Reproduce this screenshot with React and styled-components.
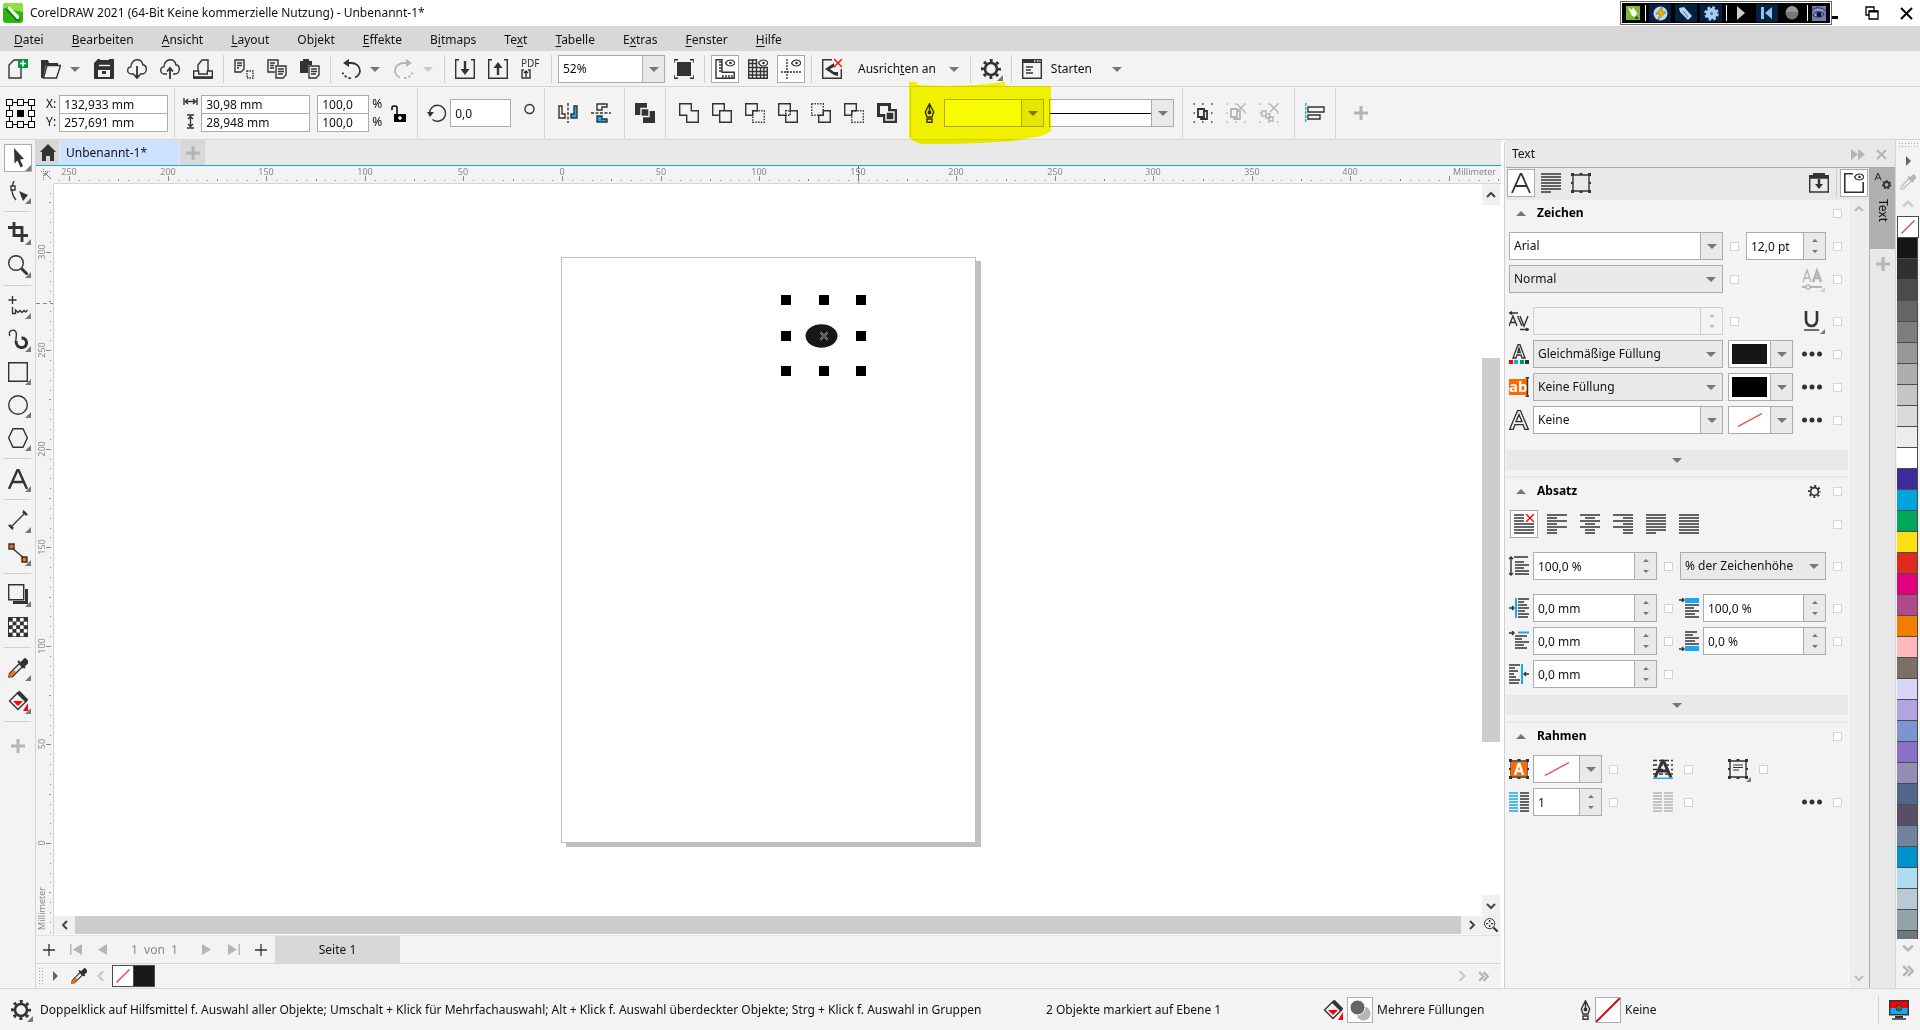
import styled, { createGlobalStyle, css } from "styled-components";

const INK = "#333333";
const MUTED = "#b5b5b5";
const BLUE = "#16a9f0";
const ORANGE = "#ff6a00";
const PX_PER_MM = 1.9712;

/* ---------- icons ---------- */

const Icon = ({ size = 20, children, ...rest }) => (
  <svg
    width={size}
    height={size}
    viewBox="0 0 20 20"
    fill="none"
    stroke={INK}
    strokeWidth="1.4"
    aria-hidden="true"
    {...rest}
  >
    {children}
  </svg>
);

const Flyout = () => <path d="M23 18v5h-5z" fill="#777" stroke="none" />;

const Caret = ({ dir = "down", color = "#777", w = 10, h = 5 }) => (
  <svg width={w} height={h} viewBox="0 0 10 5" preserveAspectRatio="none" aria-hidden="true">
    <path d={dir === "down" ? "M0 0h10L5 5z" : "M0 5h10L5 0z"} fill={color} />
  </svg>
);

const Chevron = ({ d, color = "#444", size = 10 }) => (
  <svg width={size} height={size} viewBox="0 0 10 10" fill="none" stroke={color} strokeWidth="2" aria-hidden="true">
    <path d={d} />
  </svg>
);

const UP = "M1 7l4-4 4 4";
const DOWN = "M1 3l4 4 4-4";
const LEFT = "M7 1L3 5l4 4";
const RIGHT = "M3 1l4 4-4 4";
const DOUBLE = "M1 1l4 4-4 4M5 1l4 4-4 4";

const Plus = ({ color = MUTED, size = 14, weight = 3 }) => (
  <svg width={size} height={size} viewBox="0 0 14 14" stroke={color} strokeWidth={weight} aria-hidden="true">
    <path d="M7 0v14M0 7h14" />
  </svg>
);

const Lines = ({ rows, x = 0, y = 1, step = 3, color = INK }) => (
  <g stroke={color} strokeWidth="1.5">
    {rows.map(([from, to], i) => (
      <path key={i} d={`M${x + from} ${y + i * step}H${x + to}`} />
    ))}
  </g>
);

const NewIcon = () => (
  <Icon>
    <path d="M11 1H6L1 6v13h12V9" />
    <rect x="10" y="0" width="10" height="9" fill="#009a3a" stroke="none" />
    <path d="M15 1.500v6M12 4.500h6" stroke="#fff" strokeWidth="1.600" />
  </Icon>
);
const OpenIcon = () => (
  <Icon>
    <path d="M0 1h7l1 3h9v2H5L2 19H0z" fill={INK} stroke="none" />
    <path d="M6 6.500h13.500l-4 12.500H2.500z" />
  </Icon>
);
const SaveIcon = () => (
  <Icon>
    <path d="M0 4l4-4h16v20H0z" fill={INK} stroke="none" />
    <path d="M6 0h9v6H6zM4 11h12v7H4z" fill="#f3f3f3" stroke="none" />
    <path d="M7 0h8v6H7z" fill="#f3f3f3" stroke="none" />
    <path d="M5 1h11v5H5zM8 12h4v3H8z" fill={INK} stroke="none" />
    <path d="M5 6.500h11" stroke="#f3f3f3" />
  </Icon>
);
const CLOUD = "M7 15H4.500C2 15 .7 13.200 .7 11.400c0-1.900 1.400-3.400 3.300-3.500C3.800 4.200 6.500.8 10.200.8c3 0 5.200 2 5.700 5 2 .3 3.400 2.100 3.400 4.400 0 2.600-1.800 4.800-4.300 4.800h-2";
const CloudDownIcon = () => (
  <Icon>
    <path d={CLOUD} />
    <path d="M10 7v12M7 15.500l3 3.500 3-3.500" strokeWidth="1.800" />
  </Icon>
);
const CloudUpIcon = () => (
  <Icon>
    <path d={CLOUD} />
    <path d="M10 20V9M7 12.500L10 9l3 3.500" strokeWidth="1.800" />
  </Icon>
);
const PrintIcon = () => (
  <Icon>
    <path d="M5 12V6l4-5h6v11M0.700 12h5v3h8.600v-3h5v7H.7z" />
    <path d="M1 18.500h18" strokeWidth="2.500" />
  </Icon>
);
const CutIcon = () => (
  <Icon>
    <path d="M1 1h9v9L7 13H1zM3 4h5M3 6.500h5M3 9h2" />
    <path d="M13 12h6v7h-6z" strokeDasharray="1.500 1" />
  </Icon>
);
const CopyIcon = () => (
  <Icon>
    <path d="M8 13H1V1h10v5M3 4h5M3 6.500h4M3 9h4" />
    <path d="M9 7h10v9l-3 3H9zM11 10h6M11 12.500h6M11 15h5" />
  </Icon>
);
const PasteIcon = () => (
  <Icon>
    <path d="M0 2h3V0h6v2h3v4H8v8H0z" fill={INK} stroke="none" />
    <path d="M9 7h10v9l-3 3H9zM11 10h6M11 12.500h6M11 15h5" />
  </Icon>
);
const UndoIcon = () => (
  <Icon>
    <path d="M6 4h4c5 0 9 3 9 8-.3 3-2.500 5.500-5 6.500" strokeWidth="1.800" />
    <path d="M10 19.500C6 19 3 17 1.500 13.500" strokeDasharray="2.500 2" strokeWidth="1.800" />
    <path d="M8 0v8L2 4z" fill={INK} stroke="none" />
  </Icon>
);
const RedoIcon = () => (
  <Icon stroke={MUTED}>
    <path d="M14 4h-4c-5 0-9 3-9 8 .3 3 2.500 5.500 5 6.500" strokeWidth="1.800" />
    <path d="M10 19.500c4-.5 7-2.500 8.500-6" strokeDasharray="2.500 2" strokeWidth="1.800" />
    <path d="M12 0v8l6-4z" fill={MUTED} stroke="none" />
  </Icon>
);
const ImportIcon = () => (
  <Icon>
    <path d="M4 .7H.7v18.600h18.600V.7H16" />
    <path d="M10 2v10" strokeWidth="2.400" />
    <path d="M5.500 10h9L10 16z" fill={INK} stroke="none" />
  </Icon>
);
const ExportIcon = () => (
  <Icon>
    <path d="M4 .7H.7v18.600h18.600V.7H16" />
    <path d="M10 16V6" strokeWidth="2.400" />
    <path d="M5.500 9h9L10 3z" fill={INK} stroke="none" />
  </Icon>
);
const PdfIcon = () => (
  <Icon overflow="visible">
    <text x="0" y="8" fontSize="10" fill={INK} stroke="none">PDF</text>
    <path d="M3 11H1v8h8v-8H7M5 18v-6M3 14l2-2 2 2" />
  </Icon>
);
const FullScreenIcon = () => (
  <Icon>
    <path d="M0 4V.7h4M16 .7h4V4M20 16v3.300h-4M4 19.300H0V16" />
    <rect x="3" y="3" width="14" height="14" fill={INK} stroke="none" />
  </Icon>
);
const Eye = () => (
  <>
    <path d="M10.500 4C12 1.500 13.500 1 15.500 1S19 1.500 20 4c-1 2-2.500 3-4.500 3s-4-1-5-3z" fill="#fff" strokeWidth="1.200" />
    <circle cx="15.500" cy="4" r="1.300" fill={INK} stroke="none" />
  </>
);
const RulersIcon = () => (
  <Icon>
    <path d="M1 .7h6v12.500h12.300v6H1zM4 3h3M4 6h3M4 9h3M4 12h3M8 16v3M11 16v3M14 16v3M17 16v3" />
    <Eye />
  </Icon>
);
const GridIcon = () => (
  <Icon>
    <path d="M.7 .7v18.600h18.600M4.500 0v20M8.500 0v20M12.500 8v12M16 9v11M19.300 9v11M0 1h9M0 4.500h9M0 8.500h20M0 12.500h20M0 16h20" />
    <Eye />
  </Icon>
);
const GuidesIcon = () => (
  <Icon>
    <path d="M6 0v20M0 13h20" strokeDasharray="2 1" />
    <Eye />
  </Icon>
);
const SnapOffIcon = () => (
  <Icon>
    <path d="M10 .7H.7v18.600h18.600V10" />
    <path d="M3 10l9-6v4l-4 2 4 3h4v4l-4-1z" fill={INK} stroke="none" />
    <path d="M12 0l8 8M20 0l-8 8" stroke="red" />
  </Icon>
);
const GearIcon = ({ size = 20, flyout }) => (
  <Icon size={size} overflow="visible">
    <circle cx="10" cy="10" r="6" strokeWidth="2.600" />
    <circle cx="10" cy="10" r="8.500" strokeWidth="3" strokeDasharray="3 3.675" strokeDashoffset="1.500" />
    {flyout && <path d="M22 16v6h-6z" fill="#777" stroke="none" />}
  </Icon>
);
const LaunchIcon = () => (
  <Icon>
    <path d="M.7 1h18.600v18.300H.7zM4 8h7M4 11h5M4 14h7" />
    <path d="M0 2h20" strokeWidth="4" />
    <path d="M12 2h1.500M15 2h1.500M17.500 2h1" stroke="#fff" />
  </Icon>
);

const OriginIcon = () => (
  <svg width="29" height="29" viewBox="0 0 29 29" fill="#fff" stroke="#000" aria-hidden="true">
    <path d="M3.500 3.500h22v22h-22z" fill="none" />
    {[0, 11, 22].map((y) =>
      [0, 11, 22].map((x) => (
        <rect key={`${x}-${y}`} x={x + 0.5} y={y + 0.5} width="6" height="6" fill={x === 11 && y === 11 ? "#000" : "#fff"} />
      ))
    )}
  </svg>
);
const WidthIcon = () => (
  <svg width="15" height="9" viewBox="0 0 15 9" stroke={INK} strokeWidth="1.400" aria-hidden="true">
    <path d="M1 1v7M14 1v7M2 4.500h11M5 2L2.500 4.500 5 7M10 2l2.500 2.500L10 7" fill="none" />
  </svg>
);
const HeightIcon = () => (
  <svg width="9" height="15" viewBox="0 0 9 15" stroke={INK} strokeWidth="1.400" aria-hidden="true">
    <path d="M1 1h7M1 14h7M4.500 2v11M2 5l2.500-2.500L7 5M2 10l2.500 2.500L7 10" fill="none" />
  </svg>
);
const LockIcon = () => (
  <svg width="15" height="17" viewBox="0 0 15 17" fill="none" stroke="#000" strokeWidth="1.500" aria-hidden="true">
    <path d="M1 5V2.500c0-2 5-2 5 0V9" />
    <path d="M3 9h12v8H3z" fill="#000" stroke="none" />
    <path d="M9 11v4M7 13h4" stroke="#fff" />
  </svg>
);
const RotateIcon = () => (
  <Icon>
    <path d="M2.500 11a8 8 0 1 1 3 5.500" />
    <path d="M0 9h7l-4 5z" fill={INK} stroke="none" />
  </Icon>
);
const MirrorHIcon = () => (
  <Icon>
    <path d="M10 0v20" strokeDasharray="3 1.500" />
    <path d="M1 3h3v8h3v4H1z" />
    <path d="M19 3h-3v8h-3v4h6z" fill={BLUE} />
  </Icon>
);
const MirrorVIcon = () => (
  <Icon>
    <path d="M0 10h20" strokeDasharray="3 1.500" />
    <path d="M6 7V1h10v3h-5v3z" />
    <path d="M6 13v6h10v-3h-5v-3z" fill={BLUE} />
  </Icon>
);
const CombineIcon = () => (
  <Icon>
    <path d="M0 0h12v12H0zM8 8h12v12H8z" fill={INK} stroke="none" />
    <path d="M6 5.500h8v8H6z" fill={INK} stroke="#f3f3f3" />
  </Icon>
);
const A = "M.7.7h11.600v11.600H.7z";
const B = "M7.700 7.700h11.600v11.600H7.700z";
const WeldIcon = () => (
  <Icon><path d="M.7.7h11.600v7h7v11.600H7.700v-7h-7z" /></Icon>
);
const TrimIcon = () => (
  <Icon><path d={A} /><path d={B} fill="#f3f3f3" /></Icon>
);
const IntersectIcon = () => (
  <Icon><path d="M7.700 12.300h-7V.7h11.600v7H7.700z" /><path d={B} strokeDasharray="1.500 1.300" /></Icon>
);
const SimplifyIcon = () => (
  <Icon><path d="M.7.7h11.600v7h7v11.600H7.700v-7h-7z" /><path d="M7.700 7.700h4.600v4.600H7.700z" strokeDasharray="1.500 1" /></Icon>
);
const FrontIcon = () => (
  <Icon><path d={A} strokeDasharray="1.500 1.300" /><path d="M12.300 7.700h7v11.600H7.700v-7h4.600z" /></Icon>
);
const BackIcon = () => (
  <Icon><path d={B} strokeDasharray="1.500 1.300" /><path d="M7.700 12.300h-7V.7h11.600v7H7.700z" /></Icon>
);
const BoundaryIcon = () => (
  <Icon><path d="M1.500 1.500h11v6h6v11h-11v-6h-6z" strokeWidth="3" /><path d="M9 9h8v8H9z" fill={INK} stroke="#f3f3f3" /></Icon>
);
const PenIcon = () => (
  <svg width="11" height="20" viewBox="0 0 11 20" fill="none" stroke={INK} strokeWidth="1.400" aria-hidden="true">
    <path d="M5.500 .7L9.700 9 8 14H3L1.300 9zM5.500 1v8M3 16h5v3.300H3z" />
    <circle cx="5.500" cy="9.500" r="1.300" fill={INK} />
  </svg>
);
const GroupIcon = ({ muted, cross, triple }) => {
  const c = muted ? MUTED : INK;
  return (
    <Icon stroke={c}>
      <path d="M.5 1h1.500M9 1h1.500M18 1h1.500M.5 10h1.500M.5 19h1.500M9 19h1.500M18 19h1.500M18 10h1.500" strokeWidth="1.500" />
      {triple ? (
        <path d="M3 8h4v5H3zM7 11h4v4H7zM10 14h4v4h-4z" />
      ) : (
        <path d="M5 6h6v8H5zM8 14v2h6V8h-3" strokeWidth="1.800" />
      )}
      {cross && <path d="M11 1l8 8M19 1l-8 8" />}
    </Icon>
  );
};
const AlignIcon = () => (
  <Icon>
    <path d="M.7 0v20" stroke={BLUE} strokeDasharray="3 1" />
    <path d="M3 4h16v5H3zM3 12h12v4H3z" />
  </Icon>
);

/* toolbox drawings */
const PickIcon = () => (
  <Icon overflow="visible"><path d="M6 0l10 11-4 .5 3 6.500-2.500 1.500-3-7-3 3z" fill={INK} stroke="none" /></Icon>
);
const ShapeIcon = () => (
  <Icon>
    <path d="M6 0C4 4 3 9 5 14c.7 2 2 4 3 5" />
    <path d="M3 5h4v4H3z" fill="#f3f3f3" />
    <path d="M11 10l9 4-5 6z" fill={INK} stroke="none" />
  </Icon>
);
const CropIcon = () => (
  <Icon strokeWidth="2.800"><path d="M0 5.500h14v14.500M6 0v13.500h14" /></Icon>
);
const ZoomIcon = () => (
  <Icon><circle cx="8" cy="8" r="7.300" /><path d="M13.500 13.500l6 6" strokeWidth="3" /></Icon>
);
const FreehandIcon = () => (
  <Icon strokeWidth="1.300"><path d="M4.500 0v8M.5 4h8M4.500 11v6.500h3v-3.500l2.500 2.500 2-2 2 2 2-2 1.500 1.500 2-2" /></Icon>
);
const ArtisticIcon = () => (
  <Icon>
    <path d="M2 7C-1 2 6-1 8 3c1.500 3-1 7 0 11" />
    <path d="M8 12c0 9 11 8 10.500 1.500C18.200 10.500 16 9 13.500 9" strokeWidth="3" />
  </Icon>
);
const RectIcon = () => <Icon><path d="M.7.7h18.600v18.600H.7z" /></Icon>;
const EllipseIcon = () => <Icon><circle cx="10" cy="10" r="9.300" /></Icon>;
const PolygonIcon = () => <Icon><path d="M5 .7h10l4.300 9.300L15 19.300H5L.7 10z" /></Icon>;
const TypeIcon = ({ thin }) => (
  <Icon strokeWidth={thin ? 1.8 : 2.4}><path d="M1 20L9.500 1h1L19 20M4 13h12" /></Icon>
);
const DimensionIcon = () => (
  <Icon strokeWidth="1.300"><path d="M3 17L17 3M.5 15l4.500 4.500M15 .5L19.500 5M2.500 14.500v3h3M14.500 2.500h3v3" /></Icon>
);
const ConnectorIcon = () => (
  <Icon>
    <path d="M3 4l14 12" />
    <path d="M1 1h5v5H1zM14 14h5v5h-5z" fill={ORANGE} />
  </Icon>
);
const ShadowIcon = () => (
  <Icon><path d="M5 18.500h13.500V5" strokeWidth="3" /><path d="M.7.7h15v15H.7z" fill="#f3f3f3" /></Icon>
);
const CheckerIcon = () => (
  <Icon>
    <rect width="20" height="20" fill={INK} stroke="none" />
    {[0, 1, 2, 3, 4].map((r) =>
      [0, 1, 2, 3, 4].map((c) =>
        (r + c) % 2 ? <rect key={`${r}${c}`} x={1 + c * 3.7} y={1 + r * 3.7} width="3.5" height="3.5" fill="#fff" stroke="none" /> : null
      )
    )}
  </Icon>
);
const DropperIcon = ({ size = 20, color = INK, tip = ORANGE }) => (
  <Icon size={size} stroke={color}>
    <path d="M12 5L1.500 15.500 1 19l3.500-.5L15 8" />
    <path d="M1.500 18.500L7 13" stroke={tip} strokeWidth="3" />
    <path d="M10 3l7 7M12 6l5-5 3 3-5 5z" fill={color} strokeWidth="2" />
  </Icon>
);
const BucketIcon = () => (
  <Icon>
    <path d="M10 1.500l8.500 8.500-8.500 8.500L1.500 10z" />
    <path d="M10 1l9 9" strokeWidth="4" />
    <path d="M5 10h10l-5 5zM20 12v8h-5z" fill="red" stroke="none" />
  </Icon>
);

/* docker drawings */
const ParagraphIcon = () => <Icon><Lines rows={[[0, 20], [0, 20], [0, 20], [0, 20], [0, 20], [0, 20], [0, 10]]} /></Icon>;
const FrameIcon = ({ children, flyout }) => (
  <Icon overflow="visible">
    <path d="M2 2h16v16H2z" />
    {[0, 17].map((x) => [0, 17].map((y) => <path key={`${x}${y}`} d={`M${x} ${y}h3v3h-3z`} fill={INK} stroke="none" />))}
    <path d="M8.500 1h3M8.500 19h3M1 9v2M19 9v2" strokeWidth="2" />
    {children}
    {flyout && <Flyout />}
  </Icon>
);
const ImportStyleIcon = () => (
  <Icon>
    <path d="M.7 5h18.600v14H.7z" />
    <path d="M0 5V2h4V0h12v2h4v3z" fill={INK} stroke="none" />
    <path d="M10 6v6" strokeWidth="2.400" /><path d="M6 11h8l-4 5z" fill={INK} stroke="none" />
  </Icon>
);
const PreviewIcon = () => (
  <Icon><path d="M9 .7H.7v18.600h18.600V9" strokeWidth="1.800" /><Eye /></Icon>
);
const KerningIcon = () => (
  <Icon strokeWidth="1.400">
    <path d="M0 15L4 5l4 10M1.500 11.500h5M8.500 5L13 15M11 5l4 10 4-10M0 2h9M3 .5L.7 2 3 3.500M11 18.500h9M17 17l2.300 1.500L17 20" />
  </Icon>
);
const OutlineAIcon = ({ small }) => (
  <Icon strokeWidth="1.300">
    <path
      d={small
        ? "M4 14L9 .7h2L16 14h-3l-1-3H8l-1 3zM8.700 8.500h2.600L10 4z"
        : "M.7 19.300L8.500.7h3l7.800 18.600h-3.500L14 14.700H6l-1.800 4.600zM7 11.700h6L10 4.500z"}
    />
    {small && (
      <g stroke="none">
        <path d="M0 16h4v4H0z" fill="red" /><path d="M5 16h4v4H5z" fill={BLUE} />
        <path d="M11 16h4v4h-4z" fill="#009a3a" /><path d="M16 16h4v4h-4z" fill={INK} />
      </g>
    )}
  </Icon>
);
const HighlightIcon = () => (
  <Icon>
    <path d="M0 2h18v16H0z" fill={ORANGE} stroke="none" />
    <text x="0" y="15" fontSize="15" fontWeight="700" fill="#fff" stroke="none">ab</text>
    <path d="M18.500 1v18M16.500 .7h4M16.500 19.300h4" />
  </Icon>
);
const CapsIcon = () => (
  <Icon stroke={MUTED} overflow="visible">
    <path d="M1 13L5 1l4 12M2 9h6" />
    <path d="M11 13l4-11 4 11M12.500 9h5" strokeWidth="2.600" />
    <path d="M0 18h20" strokeWidth="2" /><circle cx="6" cy="18" r="2" fill="#f3f3f3" />
    <path d="M23 18v5h-5z" fill="#ccc" stroke="none" />
  </Icon>
);
const UnderlineIcon = () => (
  <Icon overflow="visible">
    <path d="M4 0v9c0 8 11 8 11 0V0" strokeWidth="2.600" />
    <path d="M2 19h15" /><Flyout />
  </Icon>
);
const Dots = () => (
  <Icon stroke="none" fill={INK}><circle cx="2.500" cy="10" r="2.500" /><circle cx="10" cy="10" r="2.500" /><circle cx="17.500" cy="10" r="2.500" /></Icon>
);
const short = [[0, 20], [0, 10], [0, 20], [0, 10], [0, 20], [0, 10], [0, 10]];
const AlignText = ({ kind }) => {
  const rows = {
    none: [[0, 10], [0, 10], [0, 10], [0, 20], [0, 20], [0, 20], [0, 20]],
    left: short,
    center: [[0, 20], [5, 15], [0, 20], [5, 15], [0, 20], [5, 15], [5, 15]],
    right: short.map(([a, b]) => [20 - b, 20 - a]),
    justify: [[0, 20], [0, 20], [0, 20], [0, 20], [0, 20], [0, 20], [0, 10]],
    force: Array(7).fill([0, 20]),
  }[kind];
  return (
    <Icon>
      <Lines rows={rows} />
      {kind === "none" && <path d="M12 0l8 8M20 0l-8 8" stroke="red" />}
    </Icon>
  );
};
const LeadingIcon = () => (
  <Icon><path d="M2 1v18M0 3l2-2 2 2M0 17l2 2 2-2M5 1h14" /><Lines x={6} y={6} rows={[[0, 9], [0, 14], [0, 9], [0, 14], [0, 14]]} /></Icon>
);
const IndentLeftIcon = () => (
  <Icon><path d="M7 0v20" stroke={BLUE} strokeWidth="2" /><path d="M0 10h5M3 8l2 2-2 2" /><Lines x={9} rows={[[0, 11], [0, 6], [0, 9], [0, 11], [0, 7], [0, 11], [0, 10]]} /></Icon>
);
const IndentFirstIcon = () => (
  <Icon><path d="M9 1.500h11" stroke={BLUE} strokeWidth="2" /><path d="M0 2h5M3 0l2 2-2 2" /><Lines x={6} y={5} rows={[[0, 12], [0, 7], [0, 14], [0, 9], [0, 12]]} /></Icon>
);
const IndentRightIcon = () => (
  <Icon><path d="M13 0v20" stroke={BLUE} strokeWidth="2" /><path d="M20 10h-5M17 8l-2 2 2 2" /><Lines rows={[[0, 11], [0, 6], [0, 9], [0, 5], [0, 7], [0, 11], [0, 10]]} /></Icon>
);
const BeforeIcon = () => (
  <Icon><path d="M6 0h14v5H6z" fill={BLUE} stroke="none" /><path d="M0 2h5M3 0l2 2-2 2" /><Lines x={6} y={7} rows={[[0, 14], [0, 9], [0, 14], [0, 10], [0, 14]]} /></Icon>
);
const AfterIcon = () => (
  <Icon><path d="M6 15h14v5H6z" fill={BLUE} stroke="none" /><path d="M0 18h5M3 16l2 2-2 2" /><Lines x={6} y={1} rows={[[0, 12], [0, 8], [0, 14], [0, 10], [0, 14]]} /></Icon>
);
const FrameFillIcon = () => (
  <FrameIcon>
    <path d="M2 3h16v14H2z" fill={ORANGE} stroke="none" />
    <path d="M6 16l3.500-11h1L14 16M7.500 12h5" stroke="#fff" strokeWidth="2.400" />
  </FrameIcon>
);
const BaselineIcon = () => (
  <Icon>
    <path d="M0 1.500h20M0 6h20M0 10.500h20M0 15h20" strokeDasharray="4 2" />
    <path d="M2 18.500L9.500 2h1L18 18.500M5 12h10" strokeWidth="3" />
    <path d="M0 19.300h20" stroke={BLUE} />
  </Icon>
);
const ColumnsIcon = ({ muted }) => (
  <Icon>
    <Lines color={muted ? MUTED : BLUE} rows={Array(7).fill([0, 9])} />
    <Lines color={muted ? MUTED : INK} rows={Array(7).fill([11, 20])} />
  </Icon>
);

/* ---------- shell ---------- */

const GlobalStyle = createGlobalStyle`
  * { box-sizing: border-box; }
  body {
    margin: 0;
    overflow: hidden;
    background: #f3f3f3;
    color: #111;
    font: 12px/16px "Noto Sans", "Open Sans", sans-serif;
  }
  button, input, select { font: inherit; color: inherit; }
  button { background: none; border: 0; padding: 0; }
  svg { display: block; flex: none; }
`;

const Shell = styled.div`
  display: flex;
  flex-direction: column;
  height: 100vh;
`;

const TitleBar = styled.header`
  display: flex;
  align-items: center;
  flex: none;
  height: 26px;
  padding: 0 7px 0 3px;
  gap: 7px;
  background: #fff;
`;

const Title = styled.h1`
  margin: 0;
  flex: 1;
  font-size: 12px;
  font-weight: 400;
`;

const Recorder = styled.div`
  display: flex;
  align-items: center;
  justify-content: space-between;
  width: 212px;
  height: 24px;
  padding: 0 4px;
  background: #000;
  border: 1px solid #666;
  outline: 1px solid #fff;
  outline-offset: -2px;
`;

const RecorderButton = styled.button`
  display: flex;
  align-items: center;
  justify-content: center;
  width: ${(p) => (p.$narrow ? 16 : 22)}px;
  height: 18px;
  background: ${(p) => (p.$lit ? "#06213f" : "none")};
`;

const Bar = styled.i`
  width: 1px;
  height: 16px;
  background: #fff;
`;

const WindowButtons = styled.div`
  display: flex;
  align-items: center;
  gap: 21px;
`;

const MenuBar = styled.nav`
  display: flex;
  flex: none;
  height: 25px;
  padding-top: 2px;
  background: #d8d8d8;
`;

const MenuItem = styled.button`
  padding: 0 14px;
  u { text-underline-offset: 2px; }
`;

const ToolRow = styled.div`
  display: flex;
  align-items: center;
  flex: none;
  height: 36px;
  gap: 5px;
  padding: 1px 0 0 4px;
  border-bottom: 1px solid #d4d4d4;
`;

const Sep = styled.i`
  flex: none;
  width: 1px;
  height: 28px;
  margin: 0 1px;
  background: #d0d0d0;
`;

const IconButton = styled.button`
  display: flex;
  align-items: center;
  justify-content: center;
  flex: none;
  width: ${(p) => p.$w || 28}px;
  height: 28px;
  border: 1px solid ${(p) => (p.$on ? "#acacac" : "transparent")};
  background: ${(p) => (p.$on ? "#fff" : "none")};
`;

const Split = styled.div`
  display: flex;
  align-items: center;
`;

const LabelButton = styled.button`
  padding: 0 ${(p) => p.$right}px 0 ${(p) => p.$left}px;
  white-space: nowrap;
`;

const PropertyBar = styled.div`
  display: flex;
  flex: none;
  height: 53px;
  border-bottom: 1px solid #d4d4d4;
`;

const PropGroup = styled.div`
  position: relative;
  display: flex;
  align-items: center;
  gap: ${(p) => p.$gap ?? 5}px;
  margin: 1px 0;
  padding: 0 ${(p) => p.$pad ?? 6}px;
  border-right: 1px solid #d4d4d4;
  &:last-child { border-right: 0; }
`;

const Stack = styled.div`
  display: flex;
  flex-direction: column;
  align-items: center;
  gap: ${(p) => p.$gap || 0}px;
  line-height: 18px;
`;

const Field = styled.input`
  min-width: 0;
  width: ${(p) => (p.$w ? `${p.$w}px` : "100%")};
  height: ${(p) => p.$h || 28}px;
  padding: 0 4px;
  border: 1px solid #acacac;
  background: #fff;
  outline: 0;
  & + & { margin-top: -1px; }
`;

const BoxFrame = styled.div`
  display: flex;
  flex: ${(p) => (p.$w ? "none" : "1")};
  width: ${(p) => (p.$w ? `${p.$w}px` : "auto")};
  min-width: 0;
  height: 28px;
  border: 1px solid ${(p) => (p.$off ? "#d0d0d0" : "#acacac")};
  background: ${(p) => (p.$off ? "#f3f3f3" : p.$grey ? "#e9e9e9" : "#fff")};
`;

const bare = css`
  flex: 1;
  min-width: 0;
  width: 100%;
  height: 100%;
  padding: 0 4px;
  border: 0;
  border-radius: 0;
  background: none;
  outline: 0;
`;

const BareSelect = styled.select`
  ${bare}
  appearance: none;
`;

const BareInput = styled.input`
  ${bare}
`;

const ArrowCell = styled.span`
  display: flex;
  flex-direction: column;
  align-items: center;
  justify-content: ${(p) => (p.$spin ? "space-between" : "center")};
  flex: none;
  width: 22px;
  padding: ${(p) => (p.$spin ? "5px 0" : 0)};
  border-left: ${(p) => (p.$grey ? "0" : `1px solid ${p.$off ? "#d0d0d0" : "#acacac"}`)};
  background: ${(p) => (p.$off ? "none" : "#e9e9e9")};
  pointer-events: ${(p) => (p.$spin ? "auto" : "none")};
`;

const SpinButton = styled.button`
  display: flex;
  padding: 1px 4px;
`;

const Combo = ({ label, value, w, grey }) => (
  <BoxFrame $w={w} $grey={grey}>
    <BareSelect aria-label={label} defaultValue={value}>
      <option>{value}</option>
    </BareSelect>
    <ArrowCell $grey={grey}><Caret /></ArrowCell>
  </BoxFrame>
);

const Spinner = ({ label, value, w, off }) => (
  <BoxFrame $w={w} $off={off}>
    <BareInput aria-label={label} defaultValue={value} disabled={off} />
    <ArrowCell $spin $off={off}>
      <SpinButton aria-label={`${label} erhöhen`}><Caret dir="up" w={6} h={3} color={off ? "#bbb" : "#777"} /></SpinButton>
      <SpinButton aria-label={`${label} verringern`}><Caret w={6} h={3} color={off ? "#bbb" : "#777"} /></SpinButton>
    </ArrowCell>
  </BoxFrame>
);

const SwatchWell = styled.span`
  flex: 1;
  display: flex;
  padding: 3px;
  & > i { flex: 1; background: ${(p) => p.$color}; }
  svg { margin: auto; }
`;

const Colour = ({ label, color, w }) => (
  <BoxFrame as="button" $w={w} aria-label={label}>
    <SwatchWell $color={color}>
      {color ? <i /> : (
        <svg width="26" height="14" viewBox="0 0 26 14" stroke="#f33" strokeWidth="1.200"><path d="M1 13.500L25 .5" /></svg>
      )}
    </SwatchWell>
    <ArrowCell><Caret /></ArrowCell>
  </BoxFrame>
);

const LineSample = styled.span`
  flex: 1;
  align-self: center;
  height: 1px;
  background: #000;
`;

const Marker = styled.svg`
  position: absolute;
  left: -2px;
  top: -6px;
  mix-blend-mode: multiply;
  pointer-events: none;
`;

/* ---------- workspace ---------- */

const Workspace = styled.div`
  display: flex;
  flex: 1;
  min-height: 0;
`;

const Toolbox = styled.aside`
  display: flex;
  flex-direction: column;
  flex: none;
  gap: 5px;
  width: 36px;
  padding: 4px 4px 0;
  border-right: 1px solid #d4d4d4;
`;

const ToolSep = styled.i`
  height: 1px;
  margin: 1px 0;
  background: #d0d0d0;
  &:nth-last-child(2) { margin-bottom: 5px; }
`;

const ToolButton = styled(IconButton)`
  position: relative;
  ${(p) =>
    p.$fly &&
    css`
      &::after {
        content: "";
        position: absolute;
        right: 0;
        bottom: 0;
        border: 3px solid #777;
        border-top-color: transparent;
        border-left-color: transparent;
      }
    `}
`;

const Document = styled.main`
  display: flex;
  flex-direction: column;
  flex: 1;
  min-width: 0;
`;

const DocTabs = styled.div`
  display: flex;
  flex: none;
  height: 26px;
  background: #e9e9e9;
  border-bottom: 1px solid #16a9f0;
`;

const DocTab = styled.button`
  display: flex;
  align-items: center;
  justify-content: ${(p) => (p.$on ? "flex-start" : "center")};
  width: ${(p) => p.$w}px;
  padding-left: ${(p) => (p.$on ? 6 : 0)}px;
  background: ${(p) => (p.$on ? "#cde2ff" : "#d8d8d8")};
  border-right: 1px solid #e9e9e9;
`;

const CanvasGrid = styled.div`
  display: grid;
  flex: 1;
  min-height: 0;
  grid-template-columns: 18px minmax(0, 1fr) 19px;
  grid-template-rows: 18px minmax(0, 1fr) 19px;
`;

const Corner = styled.div`
  padding: 3px 5px;
`;

const TopRuler = styled.div`
  position: relative;
  display: flex;
  grid-column: 2 / 4;
  overflow: hidden;
  border-bottom: 1px solid #d4d4d4;
`;

const SideRuler = styled.div`
  position: relative;
  grid-row: 2 / 4;
  overflow: hidden;
  border-right: 1px solid #d4d4d4;
`;

const RulerScale = styled.svg`
  width: 100%;
  height: 100%;
  font-size: 9px;
  fill: #888;
`;

const Unit = styled.span`
  position: absolute;
  font-size: 9px;
  line-height: 12px;
  color: #888;
  background: #f3f3f3;
  ${(p) =>
    p.$side
      ? css`
          left: 0;
          bottom: 5px;
          writing-mode: vertical-rl;
          transform: rotate(180deg);
        `
      : css`
          right: 5px;
          top: 0;
        `}
`;

const Canvas = styled.div`
  position: relative;
  overflow: hidden;
  background: #fff;
`;

const Paper = styled.div`
  position: absolute;
  left: 507px;
  top: 73px;
  width: 415px;
  height: 586px;
  border: 1px solid #c0c0c0;
  background: #fff;
  box-shadow: 5px 4px 0 #bfbfbf;
`;

const Handle = styled.i`
  position: absolute;
  left: ${(p) => p.$x}px;
  top: ${(p) => p.$y}px;
  width: 10px;
  height: 10px;
  background: #000;
`;

const Blob = styled.svg`
  position: absolute;
  left: 750px;
  top: 140px;
`;

const ScrollV = styled.div`
  display: flex;
  flex-direction: column;
  background: #fff;
`;

const ScrollH = styled.div`
  display: flex;
  background: #fff;
`;

const ScrollButton = styled.button`
  display: flex;
  align-items: center;
  justify-content: center;
  flex: none;
  width: ${(p) => p.$w || 21}px;
  height: ${(p) => p.$h || 18}px;
  background: #f0f0f0;
`;

const TrackV = styled.div`
  display: flex;
  flex-direction: column;
  flex: 1;
  &::before { content: ""; flex: 153; }
  &::after { content: ""; flex: 153; }
`;

const Thumb = styled.div`
  flex: ${(p) => p.$grow};
  width: ${(p) => (p.$grow > 1 ? "18px" : "auto")};
  height: ${(p) => (p.$grow > 1 ? "auto" : "18px")};
  background: #cdcdcd;
`;

const PageBar = styled.div`
  display: flex;
  align-items: center;
  flex: none;
  height: 29px;
  padding-left: 3px;
  border-top: 1px solid #e2e2e2;
  border-bottom: 1px solid #d4d4d4;
`;

const PageButton = styled.button`
  display: flex;
  justify-content: center;
  width: ${(p) => p.$w}px;
`;

const PageCount = styled.span`
  width: 71px;
  text-align: center;
  white-space: pre;
  color: #888;
`;

const PageTab = styled.button`
  align-self: stretch;
  width: 125px;
  background: #d8d8d8;
`;

const DocPalette = styled.div`
  display: flex;
  align-items: center;
  flex: none;
  height: 24px;
  padding: 0 12px 0 2px;
`;

const Grip = styled.i`
  flex: none;
  width: ${(p) => (p.$wide ? 20 : 6)}px;
  height: ${(p) => (p.$wide ? 6 : 18)}px;
  background: radial-gradient(circle, #aaa 1px, transparent 1px) 0 0 / 3px 3px;
`;

const Swatch = styled.button`
  display: flex;
  flex: none;
  width: 22px;
  height: 22px;
  border: 1px solid #4c4c4c;
  background: ${(p) => p.$color || "#fff"};
  & + & { ${(p) => (p.$col ? "margin-top" : "margin-left")}: -1px; }
  svg { margin: auto; }
`;

const Splitter = styled.div`
  flex: none;
  width: 5px;
  margin-top: 2px;
  background: #fff;
  border-right: 1px solid #f3f3f3;
  box-shadow: inset -1px 0 0 #d0d0d0;
`;

/* ---------- docker ---------- */

const Docker = styled.section`
  display: flex;
  flex-direction: column;
  flex: none;
  width: 390px;
  border-right: 1px solid #d4d4d4;
`;

const DockerHead = styled.header`
  display: flex;
  align-items: center;
  flex: none;
  gap: 11px;
  height: 28px;
  padding: 1px 8px 0 6px;
  background: #e9e9e9;
  border-bottom: 1px solid #a8a8a8;
  h2 { flex: 1; margin: 0; font-size: 12px; font-weight: 400; }
`;

const DockerBody = styled.div`
  display: flex;
  flex: 1;
  min-height: 0;
`;

const DockerMain = styled.div`
  display: flex;
  flex-direction: column;
  flex: 1;
`;

const DockerTools = styled.div`
  display: flex;
  flex: none;
  gap: 2px;
  height: 32px;
  padding: 1px 1px 0;
  background: #e9e9e9;
`;

const Spring = styled.i`
  flex: 1;
`;

const DockerScroll = styled.div`
  display: flex;
  flex: 1;
`;

const Panels = styled.div`
  flex: 1;
  min-width: 0;
`;

const DockerScrollbar = styled.div`
  display: flex;
  flex-direction: column;
  align-items: center;
  justify-content: space-between;
  width: 21px;
  padding: 4px 0 5px;
  background: #eeeeee;
  border-left: 1px solid #fafafa;
`;

const Panel = styled.section`
  padding: 0 6px 0 3px;
`;

const PanelHead = styled.header`
  display: flex;
  align-items: center;
  height: 26px;
  padding-left: 7px;
  gap: 5px;
  h3 { flex: 1; margin: 0 0 0 6px; font-size: 12px; font-weight: 700; color: #000; }
`;

const Row = styled.div`
  display: flex;
  align-items: center;
  height: 28px;
  margin-top: ${(p) => p.$top ?? 5}px;
`;

const Glyph = styled.span`
  flex: none;
  width: 24px;
`;

const Gap = styled.i`
  flex: none;
  width: ${(p) => p.$w}px;
`;

const Tick = styled.input`
  appearance: none;
  flex: none;
  width: 9px;
  height: 9px;
  margin: 0 0 0 7px;
  border: 1px solid #d4d4d4;
  background: #fff;
`;

const More = styled.button`
  display: flex;
  justify-content: center;
  align-items: center;
  width: 100%;
  height: 20px;
  margin-top: ${(p) => p.$top}px;
  background: #e9e9e9;
`;

const Rule = styled.i`
  display: block;
  height: 2px;
  margin-top: 6px;
  background: #e9e9e9;
`;

const SideTabs = styled.div`
  display: flex;
  flex-direction: column;
  align-items: center;
  gap: 8px;
  width: 26px;
  border-left: 1px solid #acacac;
  background: #e9e9e9;
`;

const SideTab = styled.button`
  display: flex;
  flex-direction: column;
  align-items: center;
  gap: 8px;
  width: 100%;
  height: 81px;
  padding-top: 5px;
  background: #b0b0b0;
  span { writing-mode: vertical-rl; }
`;

const Palette = styled.aside`
  display: flex;
  flex-direction: column;
  align-items: center;
  flex: none;
  width: 24px;
  padding-top: 2px;
`;

const PaletteHead = styled.div`
  display: flex;
  flex-direction: column;
  align-items: center;
  justify-content: space-between;
  flex: none;
  height: 74px;
  padding-bottom: 6px;
`;

const PaletteList = styled.div`
  display: flex;
  flex-direction: column;
  flex: 1;
  min-height: 0;
  overflow: hidden;
`;

const PaletteFoot = styled.div`
  display: flex;
  flex-direction: column;
  align-items: center;
  flex: none;
  gap: 11px;
  height: 49px;
  padding-top: 3px;
`;

const StatusBar = styled.footer`
  display: grid;
  grid-template-columns: 29px minmax(0, 1006fr) minmax(0, 277fr) minmax(0, 257fr) minmax(0, 298fr) 42px;
  align-items: center;
  flex: none;
  height: 42px;
  padding-left: 11px;
  white-space: nowrap;
  border-top: 1px solid #d4d4d4;
`;

const StatusCell = styled.div`
  display: flex;
  align-items: center;
  gap: 4px;
`;

const StatusWell = styled.span`
  display: flex;
  width: 26px;
  height: 26px;
  border: 1px solid #acacac;
  background: #fff;
`;

const ProofButton = styled.button`
  display: flex;
  align-items: center;
  height: 28px;
  padding-left: 10px;
  border-left: 1px solid #d0d0d0;
`;

/* ---------- data ---------- */

// [text before, mnemonic, text after]
const menus = [
  ["", "D", "atei"], ["", "B", "earbeiten"], ["", "A", "nsicht"], ["", "L", "ayout"],
  ["Ob", "j", "ekt"], ["", "E", "ffekte"], ["B", "i", "tmaps"], ["Te", "x", "t"],
  ["", "T", "abelle"], ["E", "x", "tras"], ["", "F", "enster"], ["", "H", "ilfe"],
];

const tools = [
  ["Auswahl", PickIcon, true], ["Form", ShapeIcon, true], null,
  ["Beschneiden", CropIcon, true], ["Zoom", ZoomIcon, true], null,
  ["Freihand", FreehandIcon, true], ["Künstlerische Medien", ArtisticIcon, true],
  ["Rechteck", RectIcon, true], ["Ellipse", EllipseIcon, true], ["Polygon", PolygonIcon, true], null,
  ["Text", TypeIcon, true], null,
  ["Bemaßung", DimensionIcon, true], ["Verbindung", ConnectorIcon, true], null,
  ["Schatten", ShadowIcon, true], ["Transparenz", CheckerIcon, false], null,
  ["Pipette", DropperIcon, true], ["Füllung", BucketIcon, true], null,
];

const shaping = [
  ["Verschmelzen", WeldIcon], ["Zuschneiden", TrimIcon], ["Überschneiden", IntersectIcon],
  ["Vereinfachen", SimplifyIcon], ["Vorderes ohne hinteres", FrontIcon],
  ["Hinteres ohne vorderes", BackIcon], ["Umrandung", BoundaryIcon],
];

const paletteColors = [
  "#151716", "#31302e", "#4b4b4b", "#656563", "#7e7e7e", "#979797", "#acaeb0", "#c4c6c5", "#d9dbda",
  "#ececec", "#ffffff", "#3c2b98", "#00a3da", "#00a65a", "#fbe013", "#df2a1b", "#e3007f", "#af4a8b",
  "#f17e00", "#ffb9bd", "#7e6f66", "#d8d4f3", "#b1a4e0", "#7a96d2", "#8a70c6", "#948bb6", "#52658d",
  "#564f67", "#71849b", "#0092cc", "#afdcf3", "#b7cad6", "#94a3aa", "#69777e",
];

const NoColor = () => (
  <svg width="14" height="14" viewBox="0 0 14 14" stroke="#f33" strokeWidth="1.200"><path d="M.5 13.500l13-13" /></svg>
);

/* ---------- rulers ---------- */

const HorizontalRuler = () => {
  const origin = 508;
  const marks = [];
  for (let mm = -255; mm <= 475; mm += 5) marks.push(mm);
  return (
    <TopRuler>
      <RulerScale>
        {marks.map((mm) => {
          const x = Math.round(origin + mm * PX_PER_MM);
          const len = mm % 50 === 0 ? 5 : mm % 25 === 0 ? 2 : 1;
          return <rect key={mm} x={x} y={15 - len} width="1" height={len} />;
        })}
        {marks.filter((mm) => mm % 50 === 0 && mm <= 400).map((mm) => (
          <text key={mm} x={Math.round(origin + mm * PX_PER_MM)} y="9" textAnchor="middle">{Math.abs(mm)}</text>
        ))}
        <path d="M804.500 0v17" stroke="#666" strokeDasharray="3 1" />
      </RulerScale>
      <Unit>Millimeter</Unit>
    </TopRuler>
  );
};

const VerticalRuler = () => {
  const origin = 659;
  const marks = [];
  for (let mm = -45; mm <= 330; mm += 5) marks.push(mm);
  return (
    <SideRuler>
      <RulerScale>
        {marks.map((mm) => {
          const y = Math.round(origin - mm * PX_PER_MM);
          const len = mm % 50 === 0 ? 5 : mm % 25 === 0 ? 2 : 1;
          return <rect key={mm} x={15 - len} y={y} width={len} height="1" />;
        })}
        {marks.filter((mm) => mm % 50 === 0).map((mm) => {
          const y = Math.round(origin - mm * PX_PER_MM);
          return <text key={mm} x="9" y={y} textAnchor="middle" transform={`rotate(-90 9 ${y})`}>{mm}</text>;
        })}
        <path d="M0 119.500h17" stroke="#888" strokeDasharray="4 3" />
      </RulerScale>
      <Unit $side>Millimeter</Unit>
    </SideRuler>
  );
};

/* ---------- sections ---------- */

const WindowTitle = () => (
  <TitleBar>
    <svg width="20" height="20" viewBox="0 0 20 20" aria-hidden="true">
      <rect width="20" height="20" rx="3" fill="#2fb512" />
      <path d="M0 3a3 3 0 0 1 3-3h14a3 3 0 0 1 3 3v6L0 5z" fill="#8fe03a" />
      <path d="M5 3l12 12v3h-4L2 6z" fill="#128a0a" />
      <path d="M4 5l2-2 10 10v3h-2z" fill="#fff" />
    </svg>
    <Title>CorelDRAW 2021 (64-Bit Keine kommerzielle Nutzung) - Unbenannt-1*</Title>
    <WindowButtons>
      <Split>
        <Recorder>
          <RecorderButton $narrow aria-label="Corel">
            <svg width="14" height="14" viewBox="0 0 14 14"><rect width="14" height="14" fill="#83b92c" /><path d="M2 1l4 3 1-3 4 6-1 4-4-1z" fill="#fff" /><path d="M10 9l3 4H9z" fill="#1c5a12" /></svg>
          </RecorderButton>
          <Bar />
          <RecorderButton $lit aria-label="Ausführen">
            <svg width="15" height="15" viewBox="0 0 15 15"><circle cx="7.500" cy="7.500" r="7" fill="#bcd8f4" /><path d="M9 1L3 8h4l-2 6 8-8H9z" fill="#f5b400" stroke="#7a5200" strokeWidth=".5" /></svg>
          </RecorderButton>
          <RecorderButton $lit aria-label="Etikett">
            <svg width="15" height="15" viewBox="0 0 15 15"><path d="M1 2l5-1 8 9-4 4-8-8z" fill="#b5d5f3" /><path d="M5 5l5 6" stroke="#456f9d" /></svg>
          </RecorderButton>
          <RecorderButton $lit aria-label="Einstellungen">
            <svg width="15" height="15" viewBox="0 0 15 15"><circle cx="7.500" cy="7.500" r="5.500" fill="#a9cdf1" /><circle cx="7.500" cy="7.500" r="6" fill="none" stroke="#a9cdf1" strokeWidth="2.500" strokeDasharray="2.700 2" /><circle cx="7.500" cy="7.500" r="1.500" fill="#4a749f" /></svg>
          </RecorderButton>
          <Bar />
          <RecorderButton aria-label="Wiedergabe">
            <svg width="10" height="14" viewBox="0 0 10 14"><path d="M1 0l8 7-8 7z" fill="#ccc" /></svg>
          </RecorderButton>
          <RecorderButton $lit aria-label="Zum Anfang">
            <svg width="13" height="12" viewBox="0 0 13 12"><path d="M1 0h3v12H1zM12 0v12L5 6z" fill="#8cc0ef" /></svg>
          </RecorderButton>
          <RecorderButton aria-label="Aufnahme">
            <svg width="14" height="14" viewBox="0 0 14 14"><circle cx="7" cy="7" r="6.500" fill="#777" /><path d="M1 6a6 6 0 0 1 12 0z" fill="#999" /></svg>
          </RecorderButton>
          <Bar />
          <RecorderButton $narrow aria-label="Ansicht">
            <svg width="14" height="15" viewBox="0 0 14 15"><rect width="14" height="15" fill="#6e7fae" /><path d="M0 4c4-3 9-3 14 1M1 9c3-4 8-4 11-1-2 4-8 4-11 1z" fill="#93a1cf" stroke="#1c2547" /><circle cx="7" cy="8.500" r="2.500" fill="#0c1230" /></svg>
          </RecorderButton>
        </Recorder>
        <button aria-label="Minimieren">
          <svg width="12" height="14" viewBox="0 0 12 14"><path d="M0 10h6v3H0z" /></svg>
        </button>
      </Split>
      <button aria-label="Wiederherstellen">
        <svg width="14" height="14" viewBox="0 0 14 14" fill="#fff" stroke="#000" strokeWidth="1.300"><path d="M1 1h8v8H1z" /><path d="M4 5h9v8H4z" /><path d="M4 5.500h9" strokeWidth="2" /></svg>
      </button>
      <button aria-label="Schließen">
        <svg width="13" height="13" viewBox="0 0 13 13" stroke="#000" strokeWidth="2"><path d="M1 1l11 11M12 1L1 12" /></svg>
      </button>
    </WindowButtons>
  </TitleBar>
);

const StandardBar = () => (
  <ToolRow>
    <IconButton aria-label="Neu"><NewIcon /></IconButton>
    <Split>
      <IconButton aria-label="Öffnen"><OpenIcon /></IconButton>
      <IconButton $w={20} aria-label="Zuletzt geöffnet"><Caret /></IconButton>
    </Split>
    <IconButton aria-label="Speichern"><SaveIcon /></IconButton>
    <IconButton aria-label="Aus Cloud öffnen"><CloudDownIcon /></IconButton>
    <IconButton aria-label="In Cloud speichern"><CloudUpIcon /></IconButton>
    <IconButton aria-label="Drucken"><PrintIcon /></IconButton>
    <Sep />
    <IconButton aria-label="Ausschneiden"><CutIcon /></IconButton>
    <IconButton aria-label="Kopieren"><CopyIcon /></IconButton>
    <IconButton aria-label="Einfügen"><PasteIcon /></IconButton>
    <Sep />
    <Split>
      <IconButton aria-label="Rückgängig"><UndoIcon /></IconButton>
      <IconButton $w={20} aria-label="Verlauf"><Caret /></IconButton>
    </Split>
    <Split>
      <IconButton aria-label="Wiederherstellen" disabled><RedoIcon /></IconButton>
      <IconButton $w={20} aria-label="Wiederherstellungsverlauf" disabled><Caret color="#ccc" /></IconButton>
    </Split>
    <Sep />
    <IconButton aria-label="Importieren"><ImportIcon /></IconButton>
    <IconButton aria-label="Exportieren"><ExportIcon /></IconButton>
    <IconButton aria-label="Als PDF"><PdfIcon /></IconButton>
    <Sep />
    <Combo label="Zoomstufe" value="52%" w={107} />
    <IconButton aria-label="Vollbild"><FullScreenIcon /></IconButton>
    <Sep />
    <IconButton $on aria-label="Lineale"><RulersIcon /></IconButton>
    <IconButton aria-label="Gitter"><GridIcon /></IconButton>
    <IconButton $on aria-label="Hilfslinien"><GuidesIcon /></IconButton>
    <Sep />
    <IconButton aria-label="Ausrichtung aus"><SnapOffIcon /></IconButton>
    <Split>
      <LabelButton $left={7} $right={8}>Ausrich<u>t</u>en an</LabelButton>
      <IconButton $w={20} aria-label="Ausrichten an Optionen"><Caret /></IconButton>
    </Split>
    <Sep />
    <IconButton aria-label="Optionen"><GearIcon flyout /></IconButton>
    <Sep />
    <IconButton aria-label="Anwendungsstarter"><LaunchIcon /></IconButton>
    <Split>
      <LabelButton $left={0} $right={15}>Starten</LabelButton>
      <IconButton $w={20} aria-label="Programme"><Caret /></IconButton>
    </Split>
  </ToolRow>
);

const Properties = () => (
  <PropertyBar>
    <PropGroup $gap={0}>
      <button aria-label="Objektursprung"><OriginIcon /></button>
      <Gap $w={11} />
      <Stack><label htmlFor="pos-x">X:</label><label htmlFor="pos-y">Y:</label></Stack>
      <Gap $w={3} />
      <Stack>
        <Field id="pos-x" $w={109} $h={19} defaultValue="132,933 mm" />
        <Field id="pos-y" $w={109} $h={19} defaultValue="257,691 mm" />
      </Stack>
    </PropGroup>
    <PropGroup $gap={3} $pad={8}>
      <Stack $gap={8}><WidthIcon /><HeightIcon /></Stack>
      <Stack>
        <Field aria-label="Breite" $w={109} $h={19} defaultValue="30,98 mm" />
        <Field aria-label="Höhe" $w={109} $h={19} defaultValue="28,948 mm" />
      </Stack>
      <Gap $w={1} />
      <Stack>
        <Field aria-label="Skalierung X" $w={52} $h={19} defaultValue="100,0" />
        <Field aria-label="Skalierung Y" $w={52} $h={19} defaultValue="100,0" />
      </Stack>
      <Stack><span>%</span><span>%</span></Stack>
      <Gap $w={3} />
      <button aria-label="Seitenverhältnis sperren"><LockIcon /></button>
      <Gap $w={0} />
    </PropGroup>
    <PropGroup $gap={3} $pad={9}>
      <RotateIcon />
      <Field aria-label="Drehwinkel" $w={61} defaultValue="0,0" />
      <Gap $w={7} />
      <svg width="11" height="20" viewBox="0 0 11 20" fill="none" stroke={INK} strokeWidth="1.400" aria-hidden="true"><circle cx="5.500" cy="6" r="4.500" /></svg>
    </PropGroup>
    <PropGroup $pad={9}>
      <IconButton aria-label="Horizontal spiegeln"><MirrorHIcon /></IconButton>
      <IconButton aria-label="Vertikal spiegeln"><MirrorVIcon /></IconButton>
    </PropGroup>
    <PropGroup>
      <IconButton aria-label="Kombinieren"><CombineIcon /></IconButton>
    </PropGroup>
    <PropGroup $pad={9}>
      {shaping.map(([label, Glyphs]) => (
        <IconButton key={label} aria-label={label}><Glyphs /></IconButton>
      ))}
    </PropGroup>
    <PropGroup $pad={8}>
      <IconButton $w={20} as="span"><PenIcon /></IconButton>
      <Combo label="Umrissbreite" value="" w={100} />
      <BoxFrame as="button" $w={125} aria-label="Linienstil">
        <LineSample />
        <ArrowCell><Caret /></ArrowCell>
      </BoxFrame>
      <Marker width="142" height="62" viewBox="0 0 142 62" aria-hidden="true">
        <path d="M0 0h8v3l30 1 30-1L96 0v4h46v45l-9 5-30 5-32 2-30 1H12l-8-3-4-4z" fill="#fcfc00" />
      </Marker>
    </PropGroup>
    <PropGroup>
      <IconButton aria-label="Gruppieren"><GroupIcon /></IconButton>
      <IconButton aria-label="Gruppierung aufheben" disabled><GroupIcon muted cross /></IconButton>
      <IconButton aria-label="Alle Gruppierungen aufheben" disabled><GroupIcon muted cross triple /></IconButton>
      <Gap $w={0} />
    </PropGroup>
    <PropGroup>
      <IconButton aria-label="Ausrichten und verteilen"><AlignIcon /></IconButton>
    </PropGroup>
    <PropGroup $pad={11}>
      <IconButton aria-label="Anpassen"><Plus /></IconButton>
    </PropGroup>
  </PropertyBar>
);

const Drawing = () => (
  <Canvas>
    <Paper />
    {[111, 147, 182].map((y) =>
      [727, 765, 802].map((x) => (y === 147 && x === 765 ? null : <Handle key={`${x}-${y}`} $x={x} $y={y} />))
    )}
    <Blob width="35" height="25" viewBox="0 0 35 25" aria-hidden="true">
      <ellipse cx="17.500" cy="12" rx="16" ry="11.700" fill="#161918" />
      <path d="M16.500 8.500l7 7M23.500 8.500l-7 7" stroke="#999" strokeWidth="2" />
      <path d="M17 9l6 6M23 9l-6 6" stroke="#161918" strokeWidth=".7" />
    </Blob>
  </Canvas>
);

const DocumentArea = () => (
  <Document>
    <DocTabs>
      <DocTab $w={24} aria-label="Startbildschirm">
        <svg width="16" height="17" viewBox="0 0 16 17" fill={INK}><path d="M8 0l8 8h-2v9h-4v-5H6v5H2V8H0z" /></svg>
      </DocTab>
      <DocTab $w={120} $on>Unbenannt-1*</DocTab>
      <DocTab $w={26} aria-label="Neues Dokument"><Plus /></DocTab>
    </DocTabs>
    <CanvasGrid>
      <Corner>
        <svg width="10" height="11" viewBox="0 0 10 11" fill="none" stroke="#777"><path d="M0 2.500h10M2.500 0v11" strokeDasharray="1 1" /><path d="M4 4l6 6M4 7V4h3" /></svg>
      </Corner>
      <HorizontalRuler />
      <VerticalRuler />
      <Drawing />
      <ScrollV>
        <ScrollButton $w={18} $h={21} aria-label="Nach oben"><Chevron d={UP} /></ScrollButton>
        <TrackV><Thumb $grow={383} /></TrackV>
        <ScrollButton $w={18} $h={21} aria-label="Nach unten"><Chevron d={DOWN} /></ScrollButton>
      </ScrollV>
      <ScrollH>
        <ScrollButton aria-label="Nach links"><Chevron d={LEFT} /></ScrollButton>
        <Thumb $grow={1} />
        <ScrollButton aria-label="Nach rechts"><Chevron d={RIGHT} /></ScrollButton>
      </ScrollH>
      <ScrollButton $w={18} aria-label="Navigator">
        <Icon size={14}><circle cx="8" cy="8" r="7.300" /><path d="M13.500 13.500l6 6" strokeWidth="3" /><path d="M8 3v3M8 10v3M3 8h3M10 8h3" strokeWidth="2" /></Icon>
      </ScrollButton>
    </CanvasGrid>
    <PageBar>
      <PageButton $w={19} aria-label="Seite davor einfügen"><Plus color={INK} size={12} weight={1.5} /></PageButton>
      <PageButton $w={35} aria-label="Erste Seite"><svg width="12" height="11" viewBox="0 0 12 11" fill={MUTED}><path d="M0 0h1.500v11H0zM12 0v11L3 5.500z" /></svg></PageButton>
      <PageButton $w={19} aria-label="Vorige Seite"><svg width="9" height="11" viewBox="0 0 9 11" fill={MUTED}><path d="M9 0v11L0 5.500z" /></svg></PageButton>
      <Gap $w={7} />
      <PageCount>1  von  1</PageCount>
      <Gap $w={7} />
      <PageButton $w={19} aria-label="Nächste Seite"><svg width="9" height="11" viewBox="0 0 9 11" fill={MUTED}><path d="M0 0v11l9-5.500z" /></svg></PageButton>
      <PageButton $w={35} aria-label="Letzte Seite"><svg width="12" height="11" viewBox="0 0 12 11" fill={MUTED}><path d="M12 0h-1.500v11H12zM0 0v11l9-5.500z" /></svg></PageButton>
      <PageButton $w={19} aria-label="Seite danach einfügen"><Plus color={INK} size={12} weight={1.5} /></PageButton>
      <Gap $w={5} />
      <PageTab>Seite 1</PageTab>
    </PageBar>
    <DocPalette>
      <Grip />
      <Gap $w={9} />
      <svg width="5" height="10" viewBox="0 0 5 10" fill="#666"><path d="M0 0l5 5-5 5z" /></svg>
      <Gap $w={13} />
      <DropperIcon size={16} />
      <Gap $w={8} />
      <Chevron d={LEFT} color="#ccc" size={12} />
      <Gap $w={5} />
      <Swatch aria-label="Keine Farbe"><NoColor /></Swatch>
      <Swatch $color="#161918" aria-label="Schwarz" />
      <Spring />
      <Chevron d={RIGHT} color="#ccc" size={12} />
      <Gap $w={10} />
      <Chevron d={DOUBLE} color={MUTED} size={11} />
    </DocPalette>
  </Document>
);

const Option = ({ label }) => <Tick type="checkbox" aria-label={`Stil: ${label}`} />;

const CharacterPanel = () => (
  <Panel>
    <PanelHead>
      <Caret dir="up" />
      <h3>Zeichen</h3>
      <Option label="Zeichen" />
    </PanelHead>
    <Row $top={6}>
      <Combo label="Schriftart" value="Arial" w={214} />
      <Option label="Schriftart" />
      <Gap $w={7} />
      <Spinner label="Schriftgröße" value="12,0 pt" />
      <Option label="Schriftgröße" />
    </Row>
    <Row>
      <Combo label="Schriftstil" value="Normal" w={214} grey />
      <Option label="Schriftstil" />
      <Spring />
      <CapsIcon />
      <Gap $w={4} />
      <Option label="Großschreibung" />
    </Row>
    <Row $top={14}>
      <Glyph><KerningIcon /></Glyph>
      <Spinner label="Unterschneidung" value="" w={190} off />
      <Option label="Unterschneidung" />
      <Spring />
      <UnderlineIcon />
      <Gap $w={4} />
      <Option label="Unterstreichung" />
    </Row>
    {[
      ["Gleichmäßige Füllung", <OutlineAIcon small key="a" />, "#151716", true],
      ["Keine Füllung", <HighlightIcon key="b" />, "#000", true],
      ["Keine", <OutlineAIcon key="c" />, "", false],
    ].map(([value, icon, color, grey]) => (
      <Row key={value}>
        <Glyph>{icon}</Glyph>
        <Combo label={`Fülltyp ${value}`} value={value} w={190} grey={grey} />
        <Gap $w={5} />
        <Colour label={`Farbe ${value}`} color={color} w={65} />
        <Spring />
        <button aria-label="Mehr"><Dots /></button>
        <Gap $w={4} />
        <Option label={value} />
      </Row>
    ))}
  </Panel>
);

const ParagraphPanel = () => (
  <Panel>
    <PanelHead>
      <Caret dir="up" />
      <h3>Absatz</h3>
      <GearIcon size={13} />
      <Option label="Absatz" />
    </PanelHead>
    <Row $top={6}>
      {["none", "left", "center", "right", "justify", "force"].map((kind, i) => (
        <Split key={kind}>
          <Gap $w={i > 0 ? 5 : 1} />
          <IconButton $on={i === 0} aria-label={`Ausrichtung ${kind}`}><AlignText kind={kind} /></IconButton>
        </Split>
      ))}
      <Spring />
      <Option label="Ausrichtung" />
    </Row>
    <Row $top={14}>
      <Glyph><LeadingIcon /></Glyph>
      <Spinner label="Zeilenabstand" value="100,0 %" w={124} />
      <Option label="Zeilenabstand" />
      <Gap $w={7} />
      <Combo label="Abstandseinheit" value="% der Zeichenhöhe" grey />
      <Option label="Abstandseinheit" />
    </Row>
    <Row $top={14}>
      <Glyph><IndentLeftIcon /></Glyph>
      <Spinner label="Einzug links" value="0,0 mm" w={124} />
      <Option label="Einzug links" />
      <Gap $w={6} />
      <Glyph><BeforeIcon /></Glyph>
      <Spinner label="Abstand vor Absatz" value="100,0 %" />
      <Option label="Abstand vor Absatz" />
    </Row>
    <Row>
      <Glyph><IndentFirstIcon /></Glyph>
      <Spinner label="Erstzeileneinzug" value="0,0 mm" w={124} />
      <Option label="Erstzeileneinzug" />
      <Gap $w={6} />
      <Glyph><AfterIcon /></Glyph>
      <Spinner label="Abstand nach Absatz" value="0,0 %" />
      <Option label="Abstand nach Absatz" />
    </Row>
    <Row>
      <Glyph><IndentRightIcon /></Glyph>
      <Spinner label="Einzug rechts" value="0,0 mm" w={124} />
      <Option label="Einzug rechts" />
    </Row>
  </Panel>
);

const FramePanel = () => (
  <Panel>
    <PanelHead>
      <Caret dir="up" />
      <h3>Rahmen</h3>
      <Option label="Rahmen" />
    </PanelHead>
    <Row $top={6}>
      <Glyph><FrameFillIcon /></Glyph>
      <Colour label="Rahmenfarbe" w={69} />
      <Option label="Rahmenfarbe" />
      <Gap $w={35} />
      <Glyph><BaselineIcon /></Glyph>
      <Option label="Grundlinie" />
      <Gap $w={35} />
      <Glyph><FrameIcon flyout><path d="M5 6h10M5 8.500h10M5 11h6" strokeWidth="1.200" /></FrameIcon></Glyph>
      <Option label="Vertikale Ausrichtung" />
    </Row>
    <Row>
      <Glyph><ColumnsIcon /></Glyph>
      <Spinner label="Spalten" value="1" w={69} />
      <Option label="Spalten" />
      <Gap $w={35} />
      <Glyph><ColumnsIcon muted /></Glyph>
      <Option label="Spaltenbreite" />
      <Spring />
      <button aria-label="Mehr"><Dots /></button>
      <Gap $w={4} />
      <Option label="Rahmenoptionen" />
    </Row>
  </Panel>
);

const TextDocker = () => (
  <Docker>
    <DockerHead>
      <h2>Text</h2>
      <button aria-label="Einklappen"><svg width="14" height="11" viewBox="0 0 14 11" fill={MUTED}><path d="M0 0l7 5.500L0 11zM7 0l7 5.500L7 11z" /></svg></button>
      <button aria-label="Schließen"><svg width="11" height="11" viewBox="0 0 11 11" stroke={MUTED} strokeWidth="2"><path d="M1 1l9 9M10 1l-9 9" /></svg></button>
    </DockerHead>
    <DockerBody>
      <DockerMain>
        <DockerTools>
          <IconButton $on aria-label="Zeichen"><TypeIcon thin /></IconButton>
          <IconButton aria-label="Absatz"><ParagraphIcon /></IconButton>
          <IconButton aria-label="Rahmen"><FrameIcon /></IconButton>
          <Spring />
          <IconButton aria-label="Stil importieren"><ImportStyleIcon /></IconButton>
          <Sep />
          <IconButton $on aria-label="Vorschau"><PreviewIcon /></IconButton>
        </DockerTools>
        <DockerScroll>
          <Panels>
            <CharacterPanel />
            <More $top={16} aria-label="Mehr Zeichenoptionen"><Caret /></More>
            <Rule />
            <ParagraphPanel />
            <More $top={7} aria-label="Mehr Absatzoptionen"><Caret /></More>
            <Rule />
            <FramePanel />
          </Panels>
          <DockerScrollbar>
            <Chevron d={UP} color="#bbb" />
            <Chevron d={DOWN} color="#bbb" />
          </DockerScrollbar>
        </DockerScroll>
      </DockerMain>
      <SideTabs>
        <SideTab>
          <Icon size={18}><path d="M1 8L4.500 0 8 8M2 5.500h5" strokeWidth="1.200" /><circle cx="14" cy="13" r="3" strokeWidth="2" /><circle cx="14" cy="13" r="4.500" strokeDasharray="2 2" /></Icon>
          <span>Text</span>
        </SideTab>
        <button aria-label="Andockfenster hinzufügen"><Plus /></button>
      </SideTabs>
    </DockerBody>
  </Docker>
);

const ColorPalette = () => (
  <Palette>
    <PaletteHead>
      <Grip $wide />
      <svg width="5" height="10" viewBox="0 0 5 10" fill="#666"><path d="M0 0l5 5-5 5z" /></svg>
      <DropperIcon size={16} color={MUTED} tip="#ddd" />
      <Chevron d={UP} color="#ccc" size={12} />
    </PaletteHead>
    <PaletteList>
      <Swatch $col aria-label="Keine Farbe"><NoColor /></Swatch>
      {paletteColors.map((color) => (
        <Swatch $col key={color} $color={color} aria-label={color} />
      ))}
    </PaletteList>
    <PaletteFoot>
      <Chevron d={DOWN} color={MUTED} size={12} />
      <Chevron d={DOUBLE} color={MUTED} size={12} />
    </PaletteFoot>
  </Palette>
);

const Status = () => (
  <StatusBar>
    <GearIcon flyout />
    <span>Doppelklick auf Hilfsmittel f. Auswahl aller Objekte; Umschalt + Klick für Mehrfachauswahl; Alt + Klick f. Auswahl überdeckter Objekte; Strg + Klick f. Auswahl in Gruppen</span>
    <span>2 Objekte markiert auf Ebene 1</span>
    <StatusCell>
      <BucketIcon />
      <StatusWell>
        <svg width="24" height="24" viewBox="0 0 24 24"><circle cx="15.500" cy="15.500" r="7" fill="#b5b5b5" /><circle cx="9.500" cy="9.500" r="7.500" fill="#666" stroke="#fff" /></svg>
      </StatusWell>
      Mehrere Füllungen
    </StatusCell>
    <StatusCell>
      <PenIcon />
      <StatusWell>
        <svg width="24" height="24" viewBox="0 0 24 24" stroke="#c80f14" strokeWidth="2"><path d="M0 24L24 0" /></svg>
      </StatusWell>
      Keine
    </StatusCell>
    <ProofButton aria-label="Farbproof">
      <Icon>
        <path d="M1 1h18v7H1z" fill="red" stroke="none" />
        <path d="M1 8h18v6H1z" fill={BLUE} stroke="none" />
        <path d="M.7.7h18.600v14H.7zM3 19h14" />
        <path d="M6 17h8" strokeWidth="2" />
        <circle cx="10" cy="8" r="2.500" fill="#fff" />
        <circle cx="10" cy="8" r=".8" fill={INK} />
      </Icon>
    </ProofButton>
  </StatusBar>
);

const App = () => (
  <Shell>
    <GlobalStyle />
    <WindowTitle />
    <MenuBar>
      {menus.map(([before, key, after]) => (
        <MenuItem key={before + key + after}>{before}<u>{key}</u>{after}</MenuItem>
      ))}
    </MenuBar>
    <StandardBar />
    <Properties />
    <Workspace>
      <Toolbox>
        {tools.map((tool, i) => {
          if (!tool) return <ToolSep key={i} />;
          const [label, Glyphs, fly] = tool;
          return <ToolButton key={label} $on={i === 0} $fly={fly} aria-label={label}><Glyphs /></ToolButton>;
        })}
        <ToolButton aria-label="Anpassen"><Plus /></ToolButton>
      </Toolbox>
      <DocumentArea />
      <Splitter />
      <TextDocker />
      <ColorPalette />
    </Workspace>
    <Status />
  </Shell>
);

export default App;
